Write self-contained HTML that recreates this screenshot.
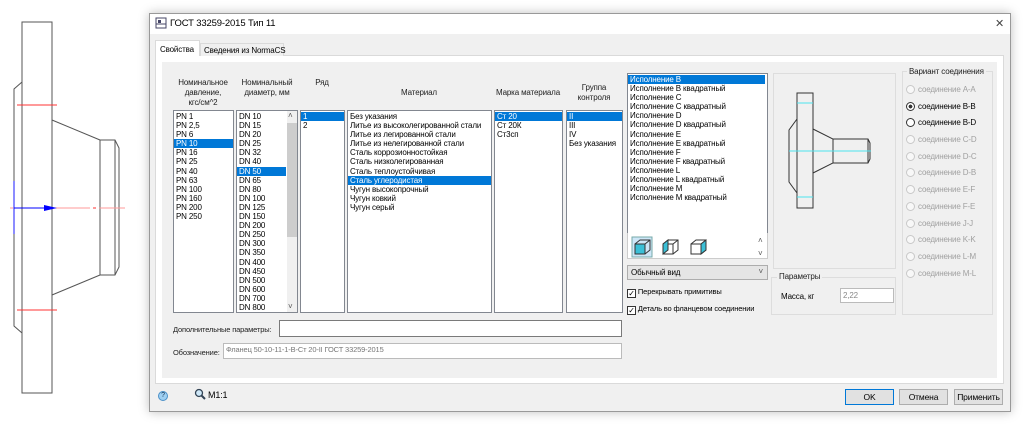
<!DOCTYPE html>
<html><head><meta charset="utf-8"><style>
*{margin:0;padding:0;box-sizing:border-box}
body{width:1024px;height:425px;background:#fff;position:relative;overflow:hidden;font-family:"Liberation Sans",sans-serif;font-size:8px;letter-spacing:-0.15px;color:#000}
.a{position:absolute;white-space:nowrap}
.list{position:absolute;background:#fff;border:1px solid #828790;line-height:9.1px;padding-top:1px;overflow:hidden;white-space:nowrap}
.list div{padding-left:2px;height:9.1px}
.sel{background:#0078d7;color:#fff}
.hdr{position:absolute;text-align:center;line-height:10px;color:#222;white-space:nowrap}
.btn{position:absolute;height:16px;border:1px solid #adadad;background:#e1e1e1;text-align:center;line-height:14px;font-size:8.5px}
.rad{position:absolute;left:906px;font-size:8px;color:#a0a0a0;white-space:nowrap}
.rad i{display:inline-block;width:9px;height:9px;border:1px solid #c8c8c8;border-radius:50%;vertical-align:-2px;margin-right:3px;background:#f8f8f8}
.cb{display:inline-block;width:9px;height:9px;border:1px solid #333;background:#fff;font-size:8px;line-height:7px;vertical-align:-2px;text-align:center}
</style></head><body>
<svg class="a" style="left:0;top:0" width="140" height="425">
<g stroke="#555" fill="none" stroke-width="1">
<rect x="22" y="22" width="30" height="371"/>
<polyline points="22,82 14,89 14,326 22,333"/>
<polyline points="52,120 100,140 100,275 52,295"/>
<polyline points="100,140 115,140 119,148 119,267 115,275 100,275"/>
<line x1="115" y1="140" x2="115" y2="275"/>
</g>
<g stroke="#f33" stroke-width="1"><line x1="17" y1="105" x2="57" y2="105"/><line x1="17" y1="310" x2="57" y2="310"/>
<line x1="10" y1="208" x2="90" y2="208" stroke="#f99"/><line x1="93" y1="208" x2="96" y2="208"/><line x1="99" y1="208" x2="125" y2="208" stroke="#f99"/></g>
<line x1="14" y1="181" x2="14" y2="234" stroke="#66f" stroke-width="1.5"/>
<line x1="14" y1="208" x2="46" y2="208" stroke="#00f"/>
<polygon points="44,205 57,208 44,211" fill="#00f"/>
</svg>
<div class="a" style="left:149px;top:13px;width:862px;height:399px;background:#f0f0f0;border:1px solid #999;box-shadow:0 0 10px rgba(0,0,0,.25)"></div>
<div class="a" style="left:150px;top:14px;width:860px;height:20px;background:#fff"></div>
<svg class="a" style="left:155px;top:17px" width="12" height="12"><rect x="1" y="1" width="10" height="10" fill="#fff" stroke="#446"/><rect x="3" y="3" width="3" height="3" fill="#446"/><line x1="1" y1="7" x2="11" y2="7" stroke="#446"/></svg>
<div class="a" style="left:170px;top:18px;font-size:9.5px">ГОСТ 33259-2015 Тип 11</div>
<div class="a" style="left:995px;top:17px;font-size:11px;color:#444">✕</div>
<div class="a" style="left:155px;top:55px;width:849px;height:329px;background:#fff;border:1px solid #dadada"></div>
<div class="a" style="left:162px;top:62px;width:835px;height:316px;background:#f0f0f0"></div>
<div class="a" style="left:155px;top:40px;width:45px;height:16px;background:#fff;border:1px solid #dadada;border-bottom:none;padding:4px 0 0 4px">Свойства</div>
<div class="a" style="left:200px;top:43px;width:84px;height:13px;background:#f0f0f0;border:1px solid #dadada;border-bottom:none;padding:2px 0 0 3px">Сведения из NormaCS</div>

<div class="hdr" style="left:168px;top:78px;width:70px">Номинальное<br>давление,<br>кгс/см^2</div>
<div class="hdr" style="left:236px;top:78px;width:62px">Номинальный<br>диаметр, мм</div>
<div class="hdr" style="left:300px;top:78px;width:44px">Ряд</div>
<div class="hdr" style="left:347px;top:88px;width:144px">Материал</div>
<div class="hdr" style="left:494px;top:88px;width:68px">Марка материала</div>
<div class="hdr" style="left:566px;top:83px;width:56px">Группа<br>контроля</div>

<div class="list" style="left:173px;top:110px;width:61px;height:203px"><div>PN 1</div><div>PN 2,5</div><div>PN 6</div><div class="sel">PN 10</div><div>PN 16</div><div>PN 25</div><div>PN 40</div><div>PN 63</div><div>PN 100</div><div>PN 160</div><div>PN 200</div><div>PN 250</div></div>
<div class="list" style="left:236px;top:110px;width:62px;height:203px"><div style="width:49px">DN 10</div><div>DN 15</div><div>DN 20</div><div>DN 25</div><div>DN 32</div><div>DN 40</div><div class="sel" style="width:49px">DN 50</div><div>DN 65</div><div>DN 80</div><div>DN 100</div><div>DN 125</div><div>DN 150</div><div>DN 200</div><div>DN 250</div><div>DN 300</div><div>DN 350</div><div>DN 400</div><div>DN 450</div><div>DN 500</div><div>DN 600</div><div>DN 700</div><div>DN 800</div><div>DN 900</div>
<span class="a" style="left:50px;top:0;width:10px;height:201px;background:#f0f0f0"></span><span class="a" style="left:50px;top:12px;width:10px;height:114px;background:#cdcdcd"></span><span class="a" style="left:51px;top:0;font-size:8px;color:#555">˄</span><span class="a" style="left:51px;top:191px;font-size:8px;color:#555">˅</span></div>
<div class="list" style="left:300px;top:110px;width:45px;height:203px"><div class="sel">1</div><div>2</div></div>
<div class="list" style="left:347px;top:110px;width:145px;height:203px"><div>Без указания</div><div>Литье из высоколегированной стали</div><div>Литье из легированной стали</div><div>Литье из нелегированной стали</div><div>Сталь коррозионностойкая</div><div>Сталь низколегированная</div><div>Сталь теплоустойчивая</div><div class="sel">Сталь углеродистая</div><div>Чугун высокопрочный</div><div>Чугун ковкий</div><div>Чугун серый</div></div>
<div class="list" style="left:494px;top:110px;width:69px;height:203px"><div class="sel">Ст 20</div><div>Ст 20К</div><div>Ст3сп</div></div>
<div class="list" style="left:566px;top:110px;width:57px;height:203px"><div class="sel">II</div><div>III</div><div>IV</div><div>Без указания</div></div>

<div class="a" style="left:173px;top:325px;color:#222;font-size:7.5px">Дополнительные параметры:</div>
<div class="a" style="left:279px;top:320px;width:343px;height:17px;background:#fff;border:1px solid #7a7a7a"></div>
<div class="a" style="left:173px;top:348px;color:#222;font-size:7.5px">Обозначение:</div>
<div class="a" style="left:223px;top:343px;width:399px;height:16px;background:#fff;border:1px solid #bbb;color:#777;padding:1px 0 0 2px;font-size:7.5px">Фланец 50-10-11-1-В-Ст 20-II ГОСТ 33259-2015</div>

<div class="list" style="left:627px;top:73px;width:141px;height:161px"><div class="sel" style="width:137px">Исполнение B</div><div>Исполнение B квадратный</div><div>Исполнение C</div><div>Исполнение C квадратный</div><div>Исполнение D</div><div>Исполнение D квадратный</div><div>Исполнение E</div><div>Исполнение E квадратный</div><div>Исполнение F</div><div>Исполнение F квадратный</div><div>Исполнение L</div><div>Исполнение L квадратный</div><div>Исполнение M</div><div>Исполнение M квадратный</div></div>
<div class="a" style="left:627px;top:233px;width:141px;height:26px;background:#fff;border:1px solid #ccc;border-top:none"></div>
<svg class="a" style="left:631px;top:236px" width="100" height="22" fill="none" stroke-width="1">
<rect x="1" y="1" width="20" height="20" fill="#cde6f7" stroke="#7aa"/>
<rect x="4" y="8" width="10" height="10" fill="#3bbfd6" stroke="#333"/><path d="M4 8l5-4h10v10l-5 4M14 8l5-4" stroke="#333"/>
<path d="M32 8h10v10H32zM32 8l5-4h10v10l-5 4M42 8l5-4" stroke="#333"/><path d="M32 8l5-4v10l-5 4z" fill="#3bbfd6" stroke="#333"/>
<path d="M60 8h10v10H60zM60 8l5-4h10v10l-5 4M70 8l5-4" stroke="#333"/><path d="M70 8l5-4v10l-5 4z" fill="#3bbfd6" stroke="#333"/>
</svg>
<div class="a" style="left:758px;top:236px;font-size:8px;color:#555">˄</div><div class="a" style="left:758px;top:249px;font-size:8px;color:#555">˅</div>
<div class="a" style="left:627px;top:265px;width:141px;height:15px;background:#e5e5e5;border:1px solid #adadad;padding:2px 0 0 3px">Обычный вид<span class="a" style="right:4px;top:1px;color:#555">˅</span></div>
<div class="a" style="left:627px;top:287px;font-size:7.5px"><span class="cb">✓</span> Перекрывать примитивы</div>
<div class="a" style="left:627px;top:304px;font-size:7.5px"><span class="cb">✓</span> Деталь во фланцевом соединении</div>

<div class="a" style="left:773px;top:73px;width:123px;height:196px;border:1px solid #ddd"></div>
<svg class="a" style="left:773px;top:73px" width="123" height="196" fill="none" stroke="#333" stroke-width="1">
<rect x="24" y="20" width="16" height="115"/>
<polyline points="24,46 16,57 16,109 24,120"/>
<polyline points="40,56 60,66 60,90 40,100"/>
<polyline points="60,66 95,66 97,70 97,86 95,90 60,90"/>
<line x1="95" y1="66" x2="95" y2="90"/>
<g stroke="#4de3ee"><line x1="24" y1="30" x2="40" y2="30"/><line x1="24" y1="124" x2="40" y2="124"/><line x1="16" y1="78" x2="98" y2="78"/></g>
</svg>
<div class="a" style="left:771px;top:277px;width:125px;height:38px;border:1px solid #ddd"></div>
<div class="a" style="left:777px;top:272px;background:#f0f0f0;padding:0 2px;color:#222">Параметры</div>
<div class="a" style="left:781px;top:292px">Масса, кг</div>
<div class="a" style="left:840px;top:288px;width:54px;height:15px;background:#fff;border:1px solid #bbb;color:#888;padding:2px 0 0 2px">2,22</div>

<div class="a" style="left:902px;top:71px;width:91px;height:244px;border:1px solid #ddd"></div>
<div class="a" style="left:907px;top:67px;background:#f0f0f0;padding:0 2px;color:#222">Вариант соединения</div>
<div class="rad" style="top:85px"><i></i>соединение A-A</div>
<div class="rad" style="top:102px;color:#000"><i style="border-color:#333;background:radial-gradient(#333 35%,#fff 40%)"></i>соединение B-B</div>
<div class="rad" style="top:118px;color:#000"><i style="border-color:#333;background:#fff"></i>соединение B-D</div>
<div class="rad" style="top:135px"><i></i>соединение C-D</div>
<div class="rad" style="top:152px"><i></i>соединение D-C</div>
<div class="rad" style="top:168px"><i></i>соединение D-B</div>
<div class="rad" style="top:185px"><i></i>соединение E-F</div>
<div class="rad" style="top:202px"><i></i>соединение F-E</div>
<div class="rad" style="top:219px"><i></i>соединение J-J</div>
<div class="rad" style="top:235px"><i></i>соединение K-K</div>
<div class="rad" style="top:252px"><i></i>соединение L-M</div>
<div class="rad" style="top:269px"><i></i>соединение M-L</div>

<div class="a" style="left:158px;top:391px;width:10px;height:10px;border-radius:50%;background:#9fd0f2;border:1px solid #4a90c8;font-size:7px;text-align:center;line-height:8px;color:#135">?</div>
<svg class="a" style="left:194px;top:388px" width="12" height="12"><circle cx="5" cy="5" r="3.5" fill="#cfe8f8" stroke="#345" stroke-width="1.3"/><line x1="7.5" y1="7.5" x2="11" y2="11" stroke="#345" stroke-width="2"/></svg>
<div class="a" style="left:208px;top:390px;font-size:9px">M1:1</div>
<div class="btn" style="left:845px;top:389px;width:49px;border:1px solid #0078d7">OK</div>
<div class="btn" style="left:899px;top:389px;width:49px">Отмена</div>
<div class="btn" style="left:954px;top:389px;width:49px">Применить</div>
</body></html>
